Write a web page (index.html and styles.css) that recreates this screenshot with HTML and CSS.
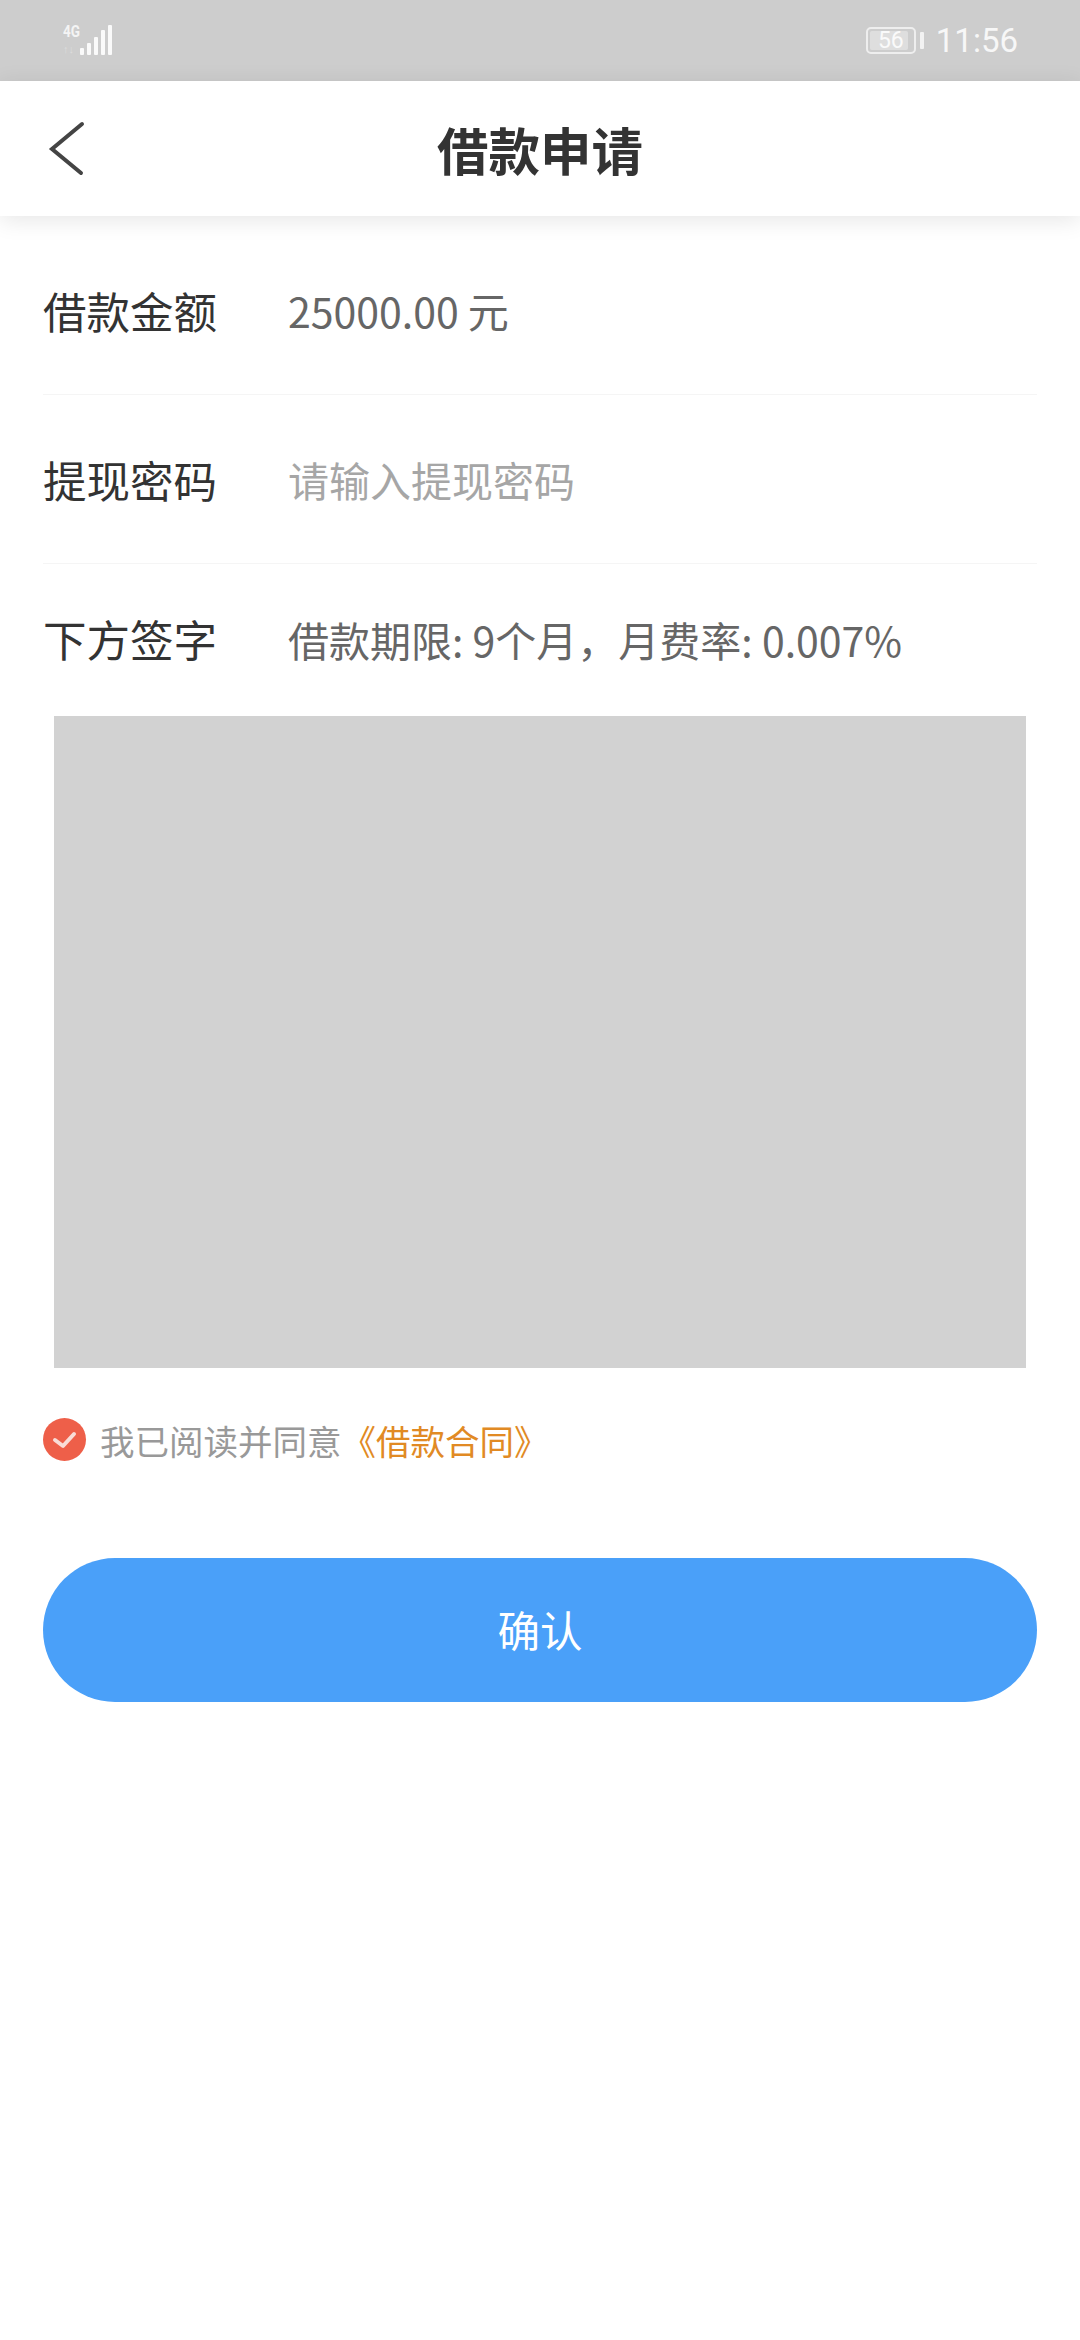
FILE: index.html
```html
<!DOCTYPE html>
<html lang="zh-CN">
<head>
<meta charset="utf-8">
<title>借款申请</title>
<link rel="stylesheet" href="styles.css">
</head>
<body>
<div class="status">
  <div class="signal">
    <div class="net">
      <span class="net-4g">4G</span>
      <span class="net-arrows">↑↓</span>
    </div>
    <div class="bars"><i class="b1"></i><i class="b2"></i><i class="b3"></i><i class="b4"></i><i class="b5"></i></div>
  </div>
  <div class="status-right">
    <div class="battery"><div class="battery-fill"></div><span class="battery-num">56</span></div>
    <div class="battery-cap"></div>
    <span class="clock">11:56</span>
  </div>
</div>
<header class="nav">
  <svg class="back" width="40" height="60" viewBox="0 0 40 60"><path d="M35 6 L5 31 L34 55" fill="none" stroke="#444" stroke-width="4" stroke-linecap="round" stroke-linejoin="miter"/></svg>
  <h1 class="title">借款申请</h1>
</header>
<main class="form">
  <div class="row row-amount"><span class="label">借款金额</span><span class="value">25000.00 元</span></div>
  <div class="row row-pass"><span class="label">提现密码</span><span class="value placeholder">请输入提现密码</span></div>
  <div class="row row-sign"><span class="label">下方签字</span><span class="value">借款期限: 9个月，月费率: 0.007%</span></div>
  <div class="sign-pad"></div>
  <div class="agree">
    <svg class="check" width="44" height="44" viewBox="0 0 44 44"><circle cx="21.500" cy="21.500" r="21.500" fill="#ee5f49"/><path d="M12 22 L20 28 L31 16" fill="none" stroke="#f9dcd6" stroke-width="4" stroke-linecap="round" stroke-linejoin="round"/></svg>
    <span class="agree-text">我已阅读并同意</span><span class="agree-link">《借款合同》</span>
  </div>
  <button class="confirm" type="button">确认</button>
</main>
</body>
</html>
```
FILE: styles.css
```css
* { box-sizing: border-box; }
html, body { margin: 0; padding: 0; }
body {
  width: 1080px;
  height: 2340px;
  background: #fff;
  overflow: hidden;
  font-family: "Noto Sans CJK SC", "Noto Sans", sans-serif;
}
.status {
  height: 81px;
  background: #cdcdcd;
  display: flex;
  justify-content: space-between;
  padding: 0 62px 0 63px;
  color: #fff;
}
.signal { display: flex; align-items: flex-end; height: 55px; }
.net { display: flex; flex-direction: column; width: 17px; height: 31px; }
.net-4g { font: 700 17px/14px "Roboto", sans-serif; white-space: nowrap; transform: scaleX(.8); transform-origin: left center; color: #f4f4f4; }
.net-arrows { font: 700 11px/10px "Roboto", sans-serif; opacity: .3; white-space: nowrap; margin-top: 7px; }
.bars { display: flex; align-items: flex-end; gap: 3px; height: 30px; }
.bars i { display: block; width: 4px; background: #fafafa; border-radius: 1px; }
.b1 { height: 7px; }
.b2 { height: 12px; }
.b3 { height: 18px; }
.b4 { height: 25px; }
.b5 { height: 30px; }
.status-right { display: flex; align-items: center; height: 81px; color: #fff; }
.battery {
  width: 50px;
  height: 27px;
  border: 2px solid #eee;
  border-radius: 5px;
  position: relative;
  display: flex;
  align-items: center;
  justify-content: center;
}
.battery-fill { position: absolute; left: 2px; top: 2px; bottom: 2px; width: 38px; background: #dedede; border-radius: 2px; }
.battery-num { position: relative; font: 400 23px/24px "Roboto", sans-serif; color: #fafafa; }
.battery-cap { width: 4px; height: 17px; background: #f2f2f2; margin-left: 4px; border-radius: 1px; }
.clock { font: 400 33px/40px "Roboto", sans-serif; margin-left: 12px; color: #f7f7f7; }
.nav {
  height: 135px;
  background: #fff;
  position: relative;
  display: flex;
  align-items: center;
  justify-content: center;
  box-shadow: 0 4px 22px rgba(0,0,0,.10);
}
.back { position: absolute; left: 47px; top: 37px; }
.title { margin: 0; font-size: 51.500px; font-weight: 700; color: #333; line-height: 70px; }
.form { padding: 0 43px; }
.row { display: flex; align-items: center; }
.row-amount { height: 179px; border-bottom: 1px solid #f5f5f5; padding-top: 10px; }
.row-pass { height: 169px; border-bottom: 1px solid #f5f5f5; }
.row-sign { height: 137px; padding-top: 12px; }
.label { width: 245px; flex: none; font-size: 43.500px; color: #333; }
.value { font-size: 41px; color: #666; white-space: nowrap; }
.placeholder { color: #a6a6a6; }
.sign-pad { margin: 15px 11px 0; height: 652px; background: #d2d2d2; }
.agree { display: flex; align-items: center; margin-top: 49px; height: 46px; }
.check { flex: none; }
.agree-text { margin-left: 13px; font-size: 34.500px; color: #999; white-space: nowrap; }
.agree-link { font-size: 34.500px; color: #e18a24; white-space: nowrap; }
.confirm {
  display: block;
  width: 994px;
  height: 144px;
  margin-top: 95px;
  padding: 0 0 4px;
  border: 0;
  border-radius: 72px;
  background: #4aa0f9;
  color: #fff;
  font: 400 42.500px "Noto Sans CJK SC", sans-serif;
}
```
